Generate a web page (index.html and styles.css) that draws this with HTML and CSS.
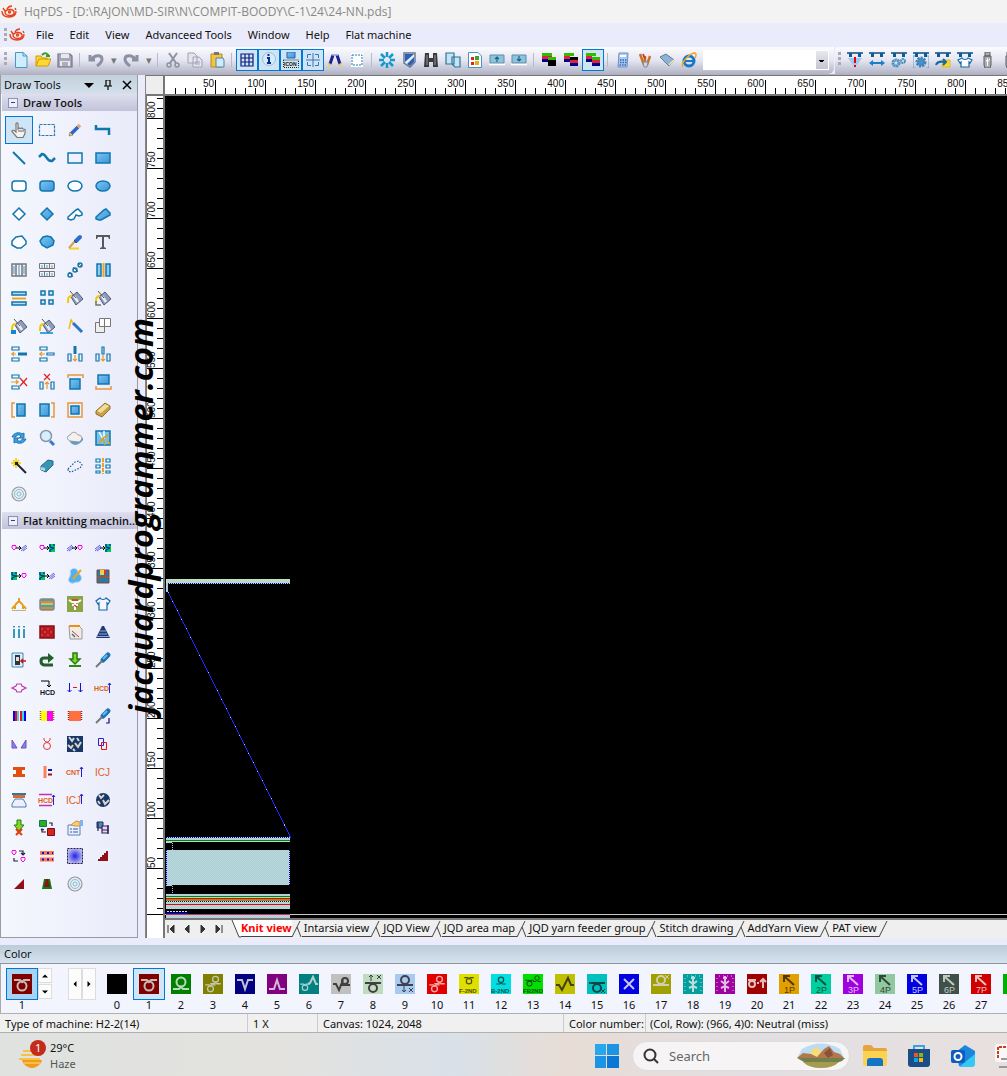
FILE: index.html
```html
<!DOCTYPE html>
<html lang="en">
<head>
<meta charset="utf-8">
<title>HqPDS</title>
<meta name="viewport" content="width=device-width, initial-scale=1">
<link rel="stylesheet" href="styles.css">
</head>
<body>
<svg class="defs" aria-hidden="true">
  <defs>
    <linearGradient id="blue" x1="0" y1="0" x2="1" y2="1"><stop offset="0" stop-color="#7cc4f2"/><stop offset="1" stop-color="#3b95d8"/></linearGradient>
    <pattern id="knit" width="2" height="2" patternUnits="userSpaceOnUse"><path fill="#a6caf0" d="M0 0h2v2H0z"/><path fill="#c0dcc0" d="M0 0h1v1H0zM1 1h1v1H1z"/></pattern>
    <radialGradient id="halo"><stop offset="0" stop-color="#2222e8"/><stop offset="1" stop-color="#b4b4ee"/></radialGradient>
  </defs>
  <symbol id="logo" viewBox="0 0 16 14"><g fill="none" stroke="#e8421e" stroke-width="1.400"><path d="M4 8c0-4 8-5 9-1s-7 5-9 1zM6 4c1-2 3-3 5-3M1 6c0 4 3 6 7 6s7-2 7-6M2 3l2 3M14 3l1 2"/><circle cx="8.500" cy="7" r="1"/></g></symbol>
  <symbol id="front" viewBox="0 0 20 20"><path d="M2 6h6l2 2 2-2h6"/><circle cx="10" cy="12" r="4.500"/></symbol>
  <symbol id="back" viewBox="0 0 20 20"><path d="M2 15h6l2-2 2 2h6"/><circle cx="10" cy="8" r="4.500"/></symbol>
  <symbol id="arrow" viewBox="0 0 20 20"><path d="M5 2l10 9M5 8V2h6"/></symbol>
  <symbol id="rail" viewBox="0 0 16 16"><path stroke="#0c4a80" stroke-width="1.500" d="M0 1h16"/><path fill="#0c5a9a" stroke="none" d="M2 1h3v4H2zM11 1h3v4h-3z"/></symbol>
  <symbol id="bucket" viewBox="0 0 16 16"><path d="M4 7l6-5 6 7-7 6z" fill="#8f9bb8" stroke="#4f5a78" stroke-width="1"/><path d="M7 6l4 6" stroke="#e8eef8" stroke-width="2.500"/><path d="M9 8L3 1" stroke="#555" stroke-width="1"/><path d="M5 6C1 6 1 8 1 13" stroke="#f0c800" stroke-width="2"/></symbol>
  <symbol id="heart" viewBox="0 0 6 8"><path d="M2 1L1 2v2l2 2 2-2V2L4 1 3 2z" fill="none" stroke="#f0e" stroke-width="1"/></symbol>
  <symbol id="slash" viewBox="0 0 6 8"><path d="M0 5l5-4M0 7l6-5M2 7l4-3" fill="none" stroke="#22d" stroke-width=".7"/></symbol>
  <symbol id="tile" viewBox="0 0 6 8"><path fill="#0c4" stroke="none" d="M0 0h6v8H0z"/><path fill="none" stroke="#00f" stroke-width="1" d="M1 0v3l4 1-4 2v2M5 0v2"/></symbol>
  <symbol id="to" viewBox="0 0 6 8"><path d="M0 4h5M3 2l2 2-2 2" fill="none" stroke="#000" stroke-width="1"/></symbol>
  <symbol id="target" viewBox="0 0 16 16"><circle cx="8" cy="8" r="7" fill="#e4ecf2" stroke="#999" stroke-width="1.200"/><circle cx="8" cy="8" r="4.500" stroke="#8fbedb" stroke-width="1"/><circle cx="8" cy="8" r="2" stroke="#8fbedb" stroke-width="1"/></symbol>
  <symbol id="edge" viewBox="0 0 10 18"><path d="M0 17L8 1M5 7l4 10" fill="none" stroke="#444"/></symbol>
</svg>

<header class="titlebar"><svg class="logo"><use href="#logo"/></svg><h1>HqPDS - [D:\RAJON\MD-SIR\N\COMPIT-BOODY\C-1\24\24-NN.pds]</h1></header>

<nav class="menubar" aria-label="Main menu">
  <i class="grip"></i><svg class="logo"><use href="#logo"/></svg>
  <button>File</button><button>Edit</button><button>View</button><button>Advanceed Tools</button><button>Window</button><button>Help</button><button>Flat machine</button>
</nav>

<div class="toolbars">
<div class="toolbar" role="toolbar" aria-label="Standard">
  <i class="grip"></i>
  <button aria-label="New"><svg viewBox="0 0 16 16"><path fill="#cdeefd" stroke="#4a96c8" stroke-width="1" d="M2.500.5H10L14 4v11.500H2.500z"/><path stroke="#4a96c8" stroke-width="1" d="M10 .5V4h4"/></svg></button>
  <button aria-label="Open"><svg viewBox="0 0 16 16"><path fill="#fdd835" stroke="#d09a00" stroke-width="1" d="M1 14V4h5l1 2h5v2M1 14l3-7h12l-3 7z"/><path stroke="#3a9a2a" stroke-width="2" d="M7 3c3-3 6-2 7 2M11 4h4"/></svg></button>
  <button aria-label="Save"><svg viewBox="0 0 16 16"><path fill="#a4a8b8" stroke="#727686" stroke-width="1.200" d="M1 2h12l2 2v11H1z"/><path fill="#e8e8f0" stroke="none" d="M4 2h8v4H4zM3 9h10v5H3z"/><path stroke="#777" stroke-width="1" d="M5 11h6M5 13h6"/></svg></button>
  <i class="sep"></i>
  <button class="wide" aria-label="Undo"><svg viewBox="0 0 16 16"><path stroke="#8b90a2" stroke-width="3" d="M2 3v5h5M3 8c4-6 11-5 11-1 0 3-2 5-5 7"/></svg></button>
  <button class="drop" aria-label="Undo list">▾</button>
  <button class="wide" aria-label="Redo"><svg viewBox="0 0 16 16"><path stroke="#8b90a2" stroke-width="3" d="M14 3v5H9M13 8C9 2 2 3 2 7c0 3 2 5 5 7"/></svg></button>
  <button class="drop" aria-label="Redo list">▾</button>
  <i class="sep"></i>
  <button aria-label="Cut"><svg viewBox="0 0 16 16"><path stroke="#8d91a0" stroke-width="2" d="M4 1l7 10M12 1L5 11"/><circle cx="4" cy="13" r="2" stroke="#8d91a0"/><circle cx="12" cy="13" r="2" stroke="#8d91a0"/></svg></button>
  <button aria-label="Copy"><svg viewBox="0 0 16 16"><path fill="#e4e5ee" stroke="#9fa2b2" stroke-width="1" d="M1 1h6l3 3v7H1zM6 5h6l3 3v7H6z"/><path stroke="#9fa2b2" stroke-width="1" d="M8 10h5M8 12h5"/></svg></button>
  <button aria-label="Paste"><svg viewBox="0 0 16 16"><path fill="#f2c53c" stroke="#b08a28" stroke-width="1" d="M2 2h11v13H2z"/><path fill="#777" stroke="none" d="M5 0h5v3H5z"/><path fill="#cfeafa" stroke="#5484a4" stroke-width="1" d="M7 6h7l1 2v7H7z"/></svg></button>
  <i class="sep"></i>
  <button class="on" aria-pressed="true" aria-label="Grid"><svg viewBox="0 0 16 16"><path stroke="#0a1c78" stroke-width="1.200" d="M2 2h12v12H2zM2 6h12M2 10h12M6 2v12M10 2v12"/></svg></button>
  <button class="on" aria-pressed="true" aria-label="Information"><svg viewBox="0 0 16 16"><circle cx="8" cy="7" r="6.500" fill="#d4ebfb" stroke="#9ac0dc" stroke-width="1"/><path stroke="#0a2e8c" stroke-width="2" d="M6 6h2v5M6 11h4M7.500 2v2"/></svg></button>
  <button class="on" aria-pressed="true" aria-label="Icon display"><svg viewBox="0 0 16 16"><path fill="url(#blue)" stroke="#2b62b8" stroke-width="1" d="M4 0h8v6H4z"/><path stroke="#222" stroke-width="1" stroke-dasharray="1 1" d="M.5 8h15v7.500H.5z"/><text class="tiny" x="1" y="14">ICON</text></svg></button>
  <button class="on" aria-pressed="true" aria-label="Crosshair"><svg viewBox="0 0 16 16"><path stroke="#3a74b4" stroke-width="1" d="M2.500 6V2.500H6M10 2.500h3.500V6M2.500 10v3.500H6M10 13.500h3.500V10M8 1v5M8 10v5M1 8h5M10 8h5M7 7h2v2H7z"/></svg></button>
  <button aria-label="Pens"><svg viewBox="0 0 16 16"><path stroke="#1a2090" stroke-width="3" d="M3 12L6 3M13 12L10 3"/><path stroke="#8aa0e0" stroke-width="1.500" d="M5 3h6"/><path fill="#f5d020" stroke="none" d="M1 15l1-4 2 1zM15 15l-1-4-2 1z"/></svg></button>
  <button aria-label="Selection"><svg viewBox="0 0 16 16"><path fill="#fff" stroke="none" d="M2 1h12v14H2z"/><path stroke="#1b7cae" stroke-width="1" stroke-dasharray="2 1" d="M3 3h10v10H3z"/></svg></button>
  <i class="sep"></i>
  <button aria-label="Spin"><svg viewBox="0 0 16 16"><path stroke="#1598cc" stroke-width="2.500" d="M8 0v5M8 11v5M0 8h5M11 8h5M2 2l4 4M10 10l4 4M14 2l-4 4M6 10l-4 4"/></svg></button>
  <button aria-label="Shield"><svg viewBox="0 0 16 16"><path fill="#e9eef6" stroke="#6d7890" d="M3 1h11v9l-5 5-6-4z"/><path fill="#2563b8" stroke="none" d="M4 2h9l-9 8zM13 5v5l-4 4-3-2z"/></svg></button>
  <button aria-label="Find"><svg viewBox="0 0 16 16"><path fill="#3a3a3e" stroke="none" d="M2 1h4v5h4V1h4l1 14h-5v-5H6v5H1z"/><path stroke="#999" stroke-width="1" d="M4 3v10M12 3v10"/></svg></button>
  <button aria-label="Cascade"><svg viewBox="0 0 16 16"><path fill="#c5e4f3" stroke="#2f7297" stroke-width="1.200" d="M1 1h8v11H1zM7 5h8v10h-5l-3-3z"/></svg></button>
  <button aria-label="Color file"><svg viewBox="0 0 16 16"><path fill="#fff" stroke="#4b93c6" stroke-width="1" d="M1.500.5H11L14.500 4v11.500h-13z"/><path stroke="none" fill="#3aa430" d="M8 4h4v4H8z"/><path stroke="none" fill="#d22" d="M4 5h3v3H4zM4 10h3v3H4z"/><path stroke="none" fill="#e8ae10" d="M8 9h4v4H8z"/></svg></button>
  <button aria-label="Upload"><svg viewBox="0 0 16 16"><path fill="#8fc3dc" stroke="#5b8eaa" stroke-width="1" d="M1 3h14v8H1z"/><path stroke="#fff" d="M0 12.500h16"/><path stroke="#15648c" stroke-width="1.200" d="M8 10V5M6 7l2-2 2 2"/></svg></button>
  <button aria-label="Download"><svg viewBox="0 0 16 16"><path fill="#8fc3dc" stroke="#5b8eaa" stroke-width="1" d="M1 3h14v8H1z"/><path stroke="#fff" d="M0 12.500h16"/><path stroke="#15648c" stroke-width="1.200" d="M8 4v5M6 7l2 2 2-2"/></svg></button>
  <i class="sep"></i>
  <button aria-label="Layer front"><svg viewBox="0 0 16 16"><g stroke="none"><path fill="#3b0" d="M1 1h10v3H1z"/><path fill="#e02040" d="M1 4h10v3H1z"/><path fill="#008" d="M1 7h6v3H1z"/><path fill="#3b0" d="M7 5h8v3H7z"/><path fill="#000" d="M7 8h8v6H7z"/></g></svg></button>
  <button aria-label="Layer middle"><svg viewBox="0 0 16 16"><g stroke="none"><path fill="#3b0" d="M1 1h10v3H1z"/><path fill="#e02040" d="M1 4h6v3H1z"/><path fill="#008" d="M1 7h6v3H1z"/><path fill="#000" d="M7 5h8v3H7z"/><path fill="#e02040" d="M7 8h8v3H7z"/><path fill="#008" d="M7 11h8v3H7z"/></g></svg></button>
  <button class="on" aria-pressed="true" aria-label="Layer all"><svg viewBox="0 0 16 16"><g stroke="none"><path fill="#3b0" d="M1 1h10v3H1z"/><path fill="#e02040" d="M1 4h6v3H1z"/><path fill="#008" d="M1 7h6v3H1z"/><path fill="#3b0" d="M7 5h8v3H7z"/><path fill="#e02040" d="M7 8h8v3H7z"/><path fill="#008" d="M7 11h8v3H7z"/></g></svg></button>
  <i class="sep"></i>
  <button aria-label="Calculator"><svg viewBox="0 0 16 16"><path fill="#a9cbf2" stroke="#6a90c8" stroke-width="1" d="M4 1h9l-1 14H3z"/><path stroke="#fff" stroke-width="2" d="M5 4h6"/><path stroke="#3a68b4" stroke-width="1.500" stroke-dasharray="1.500 1" d="M5 8h7M5 10.500h7M4.500 13h7"/></svg></button>
  <button aria-label="Brushes"><svg viewBox="0 0 16 16"><path stroke="#bf7828" stroke-width="2.500" d="M7 13L3 2M8 13V4M10 13l3-9"/><path stroke="#d33" stroke-width="2" d="M6 2l2 5"/><path fill="#ccd6e0" stroke="#889" stroke-width="1" d="M6 10h5l-1 5H7z"/></svg></button>
  <button aria-label="Eraser"><svg viewBox="0 0 16 16"><path fill="#8fb3d6" stroke="#5f7990" stroke-width="1" d="M1 5l6-3 8 6-5 6z"/><path stroke="#f4e6b4" stroke-width="1.500" d="M10 13l5-5"/></svg></button>
  <button aria-label="Browser"><svg viewBox="0 0 16 16"><circle cx="8" cy="9" r="5" stroke="#1878c8" stroke-width="3"/><path stroke="#1878c8" stroke-width="2" d="M4 9h9"/><path stroke="#f3a31c" stroke-width="1.500" d="M2 15C-1 11 9 1 14 1c2 1 1 3 0 5"/></svg></button>
  <select class="combo" aria-label="Quick search"><option></option></select>
</div>
<div class="toolbar machine" role="toolbar" aria-label="Machine">
  <i class="grip"></i>
  <button aria-label="Check"><svg viewBox="0 0 16 16"><use href="#rail"/><path fill="#9dc9f2" stroke="none" d="M1 6h14l-5 7H6z"/><path stroke="#e00" stroke-width="2" d="M8 5v6M8 13v2"/></svg></button>
  <button aria-label="Width"><svg viewBox="0 0 16 16"><use href="#rail"/><path fill="#1b7ec8" stroke="none" d="M0 11l4-3v2h8V8l4 3-4 3v-2H4v2z"/></svg></button>
  <button aria-label="Gears"><svg viewBox="0 0 16 16"><use href="#rail"/><circle cx="5" cy="11" r="3" stroke="#4a90c4" stroke-width="3" stroke-dasharray="2 .5"/><circle cx="12" cy="9" r="2" stroke="#4a90c4" stroke-width="2" stroke-dasharray="2 .5"/></svg></button>
  <button aria-label="Setup"><svg viewBox="0 0 16 16"><use href="#rail"/><circle cx="8" cy="10" r="4" fill="#4a90c4" stroke="#3f86bb" stroke-width="3" stroke-dasharray="2 1"/><path stroke="#5aa0d0" stroke-width="1" d="M2 4H0v12h3M14 4h2v12h-3"/></svg></button>
  <button aria-label="Transfer"><svg viewBox="0 0 16 16"><use href="#rail"/><path fill="#f6d83c" stroke="#e5bd10" stroke-width="1" d="M8 8h7v7H7z"/><path stroke="#1668a8" stroke-width="2" d="M1 13c1-3 4-4 9-3M8 7l3 3-3 3"/></svg></button>
  <button aria-label="Garment"><svg viewBox="0 0 16 16"><use href="#rail"/><path fill="#fff" stroke="#1668a8" stroke-width="1.200" d="M5 6L1 8l2 3 1-1v5h8v-5l1 1 2-3-4-2c-1 2-5 2-6 0z"/></svg></button>
  <button aria-label="USB drive"><svg viewBox="0 0 16 16"><path fill="#aaadb0" stroke="#5c6064" stroke-width="1" d="M6 0h5v4H6zM5 4h7v9l-1 3H6l-1-3z"/><path stroke="#fff" stroke-width="1" d="M8.500 6v8M7 8l1.500 2L11 7"/></svg></button>
  <button aria-label="USB drive 2"><svg viewBox="0 0 16 16"><path fill="#aaadb0" stroke="#5c6064" stroke-width="1" d="M6 0h5v4H6zM5 4h7v9l-1 3H6l-1-3z"/></svg></button>
</div>
</div>

<div class="workspace">
<aside class="tools">
  <div class="dock-head"><h2>Draw Tools</h2>
    <button aria-label="Dock menu"><svg viewBox="0 0 10 10"><path fill="#000" stroke="none" d="M0 3h10L5 8z"/></svg></button>
    <button aria-label="Pin"><svg viewBox="0 0 10 10"><path stroke="#000" stroke-width="1.200" d="M3 0h4v6M3 0v6M1 6h8M5 6v4"/></svg></button>
    <button aria-label="Close"><svg viewBox="0 0 10 10"><path stroke="#000" stroke-width="1.500" d="M1 1l8 8M9 1L1 9"/></svg></button>
  </div>
  <h3><span class="minus"></span>Draw Tools</h3>
  <div class="grid">
    <button class="on" aria-label="Hand"><svg viewBox="0 0 16 16"><path fill="#f4f4f2" stroke="#777" stroke-width="1.200" d="M5 10V2c0-1.500 2-1.500 2 0v5l1-1 1.500.5L11 6l1 1 2 .5v4l-2 4H6L1 9.500c0-2 2-1.500 4 .5zM8 8v2M10 8v2M12 8v2"/></svg></button>
    <button aria-label="Marquee"><svg viewBox="0 0 16 16"><path stroke="#277ba8" stroke-width="1.200" stroke-dasharray="3 1" d="M.5 2.500h15v11H.5z"/></svg></button>
    <button aria-label="Pencil"><svg viewBox="0 0 16 16"><path stroke="#2b66cc" stroke-width="3.500" d="M4 12l7-7"/><path stroke="#e0a66c" stroke-width="3.500" d="M11 5l2-2"/><path fill="#f3c56b" stroke="#555" stroke-width=".5" d="M2 14l1-4 3 3z"/></svg></button>
    <button aria-label="Polyline"><svg viewBox="0 0 16 16"><path stroke-width="2.500" d="M1 3v4h13v6"/></svg></button>
    <button aria-label="Line"><svg viewBox="0 0 16 16"><path stroke-width="2" d="M2 2l12 12"/></svg></button>
    <button aria-label="Curve"><svg viewBox="0 0 16 16"><path stroke-width="2.500" d="M0 7l3-3c5 0 4 8 10 7l3-3"/></svg></button>
    <button aria-label="Rectangle"><svg viewBox="0 0 16 16"><path d="M1 3h14v10H1z"/></svg></button>
    <button aria-label="Filled rectangle"><svg viewBox="0 0 16 16"><path fill="url(#blue)" d="M1 3h14v10H1z"/></svg></button>
    <button aria-label="Rounded rectangle"><svg viewBox="0 0 16 16"><rect x="1" y="3" width="14" height="10" rx="3" fill="#fff"/></svg></button>
    <button aria-label="Filled rounded rectangle"><svg viewBox="0 0 16 16"><rect x="1" y="3" width="14" height="10" rx="3" fill="url(#blue)"/></svg></button>
    <button aria-label="Ellipse"><svg viewBox="0 0 16 16"><ellipse cx="8" cy="8" rx="7" ry="5" fill="#fff"/></svg></button>
    <button aria-label="Filled ellipse"><svg viewBox="0 0 16 16"><ellipse cx="8" cy="8" rx="7" ry="5" fill="url(#blue)"/></svg></button>
    <button aria-label="Diamond"><svg viewBox="0 0 16 16"><path fill="#fff" d="M8 2l6 6-6 6-6-6z"/></svg></button>
    <button aria-label="Filled diamond"><svg viewBox="0 0 16 16"><path fill="url(#blue)" d="M8 2l6 6-6 6-6-6z"/></svg></button>
    <button aria-label="Polygon"><svg viewBox="0 0 16 16"><path fill="#fff" d="M1 11l8-7 2-1 4 4v2l-3 1-3-1-2 4-3 1-3-1z"/></svg></button>
    <button aria-label="Filled polygon"><svg viewBox="0 0 16 16"><path fill="url(#blue)" d="M1 11l8-7 2-1 4 4v2l-9 5H4l-3-1z"/></svg></button>
    <button aria-label="Free shape"><svg viewBox="0 0 16 16"><path fill="#fff" d="M5 3l6-1 4 5v3l-5 4H6l-5-3V7z"/></svg></button>
    <button aria-label="Filled free shape"><svg viewBox="0 0 16 16"><path fill="url(#blue)" d="M4 3l4-1 4 1 3 4-1 4-6 3-5-3-2-4z"/></svg></button>
    <button aria-label="Color picker"><svg viewBox="0 0 16 16"><path stroke="#f6d21a" stroke-width="2" d="M2 14.500h10"/><path stroke="#d4a050" stroke-width="2" d="M2 14l6-7"/><path stroke="#2d6fc8" stroke-width="4" stroke-linecap="round" d="M9 7l4-4"/><path stroke="#444" stroke-width="1" d="M7 6l3 3"/></svg></button>
    <button aria-label="Text"><svg viewBox="0 0 16 16"><path fill="#555a60" stroke="none" d="M1 1h14v4h-1l-1-2H9v10l2 1v1H5v-1l2-1V3H3L2 5H1z"/></svg></button>
    <button aria-label="Columns"><svg viewBox="0 0 16 16"><path stroke="#777" d="M1 2h14v12H1zM5 2v12M11 2v12"/><path stroke="#4090c0" stroke-width="1" d="M3 4v8M8 2v12M13 4v8"/></svg></button>
    <button aria-label="Cells"><svg viewBox="0 0 16 16"><path stroke="#777" stroke-width="1" d="M.5 1.500h15v5H.5zM.5 9.500h15v5H.5zM5.500 2v5M10.500 2v5M5.500 9.500v5M10.500 9.500v5"/><path stroke="#4ba0cc" stroke-width="1" d="M3 3v3M8 3v3M13 3v3M3 11v3M8 11v3M13 11v3"/></svg></button>
    <button aria-label="Diagonal copy"><svg viewBox="0 0 16 16"><circle cx="3" cy="13" r="2"/><circle cx="8" cy="8" r="2"/><circle cx="13" cy="3" r="2"/><path stroke="#445" stroke-width=".7" d="M2 10l4 5M6 5l5 5M11 1l4 4"/></svg></button>
    <button aria-label="Mirror vertical"><svg viewBox="0 0 16 16"><path fill="#8fcbee" d="M2 2h4v12H2zM11 2h4v12h-4z"/><path stroke="#f0a41c" stroke-width="2" d="M8.500 1v14"/></svg></button>
    <button aria-label="Mirror horizontal"><svg viewBox="0 0 16 16"><path fill="#b3def4" d="M1 2h14v3H1zM1 12h14v3H1z"/><path stroke="#f0a41c" stroke-width="2" d="M1 8.500h14"/></svg></button>
    <button aria-label="Four copies"><svg viewBox="0 0 16 16"><path fill="#ceeafa" d="M2 1h4v4H2zM10 1h4v4h-4zM2 10h4v4H2zM10 10h4v4h-4z"/></svg></button>
    <button aria-label="Fill"><svg viewBox="0 0 16 16"><use href="#bucket"/></svg></button>
    <button aria-label="Fill edge"><svg viewBox="0 0 16 16"><use href="#bucket"/><path stroke="#776" d="M1 11v4h5"/></svg></button>
    <button aria-label="Fill color"><svg viewBox="0 0 16 16"><use href="#bucket"/><path fill="#18c" stroke="none" d="M0 12h5v4H0z"/></svg></button>
    <button aria-label="Fill line"><svg viewBox="0 0 16 16"><use href="#bucket"/><path stroke="#08d" d="M1 15h13"/></svg></button>
    <button aria-label="Outline pen"><svg viewBox="0 0 16 16"><path stroke="#2876c8" stroke-width="3" d="M6 5l9 9"/><path stroke="#efbd18" d="M2 11L4 2l2 3"/></svg></button>
    <button aria-label="Pages"><svg viewBox="0 0 16 16"><path fill="#eee" stroke="#777" stroke-width="1" d="M.5 4.500h9v10h-9z"/><path fill="#fff" stroke="#777" stroke-width="1" d="M4.500.5h5v8h-5zM9.500.5h6v8h-6z"/></svg></button>
    <button aria-label="Insert row left"><svg viewBox="0 0 16 16"><path d="M1 1h7v3H1zM1 12h7v3H1z" stroke-width="1.200"/><path stroke-width="3" d="M7 8h9"/><path stroke="#e69a2c" stroke-width="1.200" d="M0 8h5M3 6L1 8l2 2"/></svg></button>
    <button aria-label="Insert rows"><svg viewBox="0 0 16 16"><path d="M1 1h7v3H1zM1 12h7v3H1zM8 7h7v2H8z" stroke-width="1.200"/><path stroke="#e69a2c" stroke-width="1.200" d="M0 8h6M3 6L1 8l2 2"/></svg></button>
    <button aria-label="Insert column"><svg viewBox="0 0 16 16"><path d="M1 8h3v7H1zM12 8h3v7h-3z" stroke-width="1.200"/><path stroke-width="3" d="M8 0v8"/><path stroke="#e69a2c" stroke-width="1.200" d="M8 9v6M6 13l2 2 2-2"/></svg></button>
    <button aria-label="Insert columns"><svg viewBox="0 0 16 16"><path d="M1 8h3v7H1zM12 8h3v7h-3zM7 1h2v7H7z" stroke-width="1.200"/><path stroke="#e69a2c" stroke-width="1.200" d="M8 9v6M6 13l2 2 2-2"/></svg></button>
    <button aria-label="Delete row"><svg viewBox="0 0 16 16"><path d="M1 1h7v3H1zM1 12h7v3H1z" stroke-width="1.200"/><path stroke="#e69a2c" stroke-width="1.200" d="M0 8h8M5 6l2 2-2 2"/><path stroke="#d22" stroke-width="1.200" d="M9 4l7 8M16 4l-7 8"/></svg></button>
    <button aria-label="Delete column"><svg viewBox="0 0 16 16"><path d="M1 8h3v7H1zM12 8h3v7h-3z" stroke-width="1.200"/><path stroke="#e69a2c" stroke-width="1.200" d="M8 15V8M6 10l2-2 2 2"/><path stroke="#d22" stroke-width="1.200" d="M5 0l6 6M11 0L5 6"/></svg></button>
    <button aria-label="Align top"><svg viewBox="0 0 16 16"><path stroke="#e8963c" d="M1 4V1h15v3"/><path fill="url(#blue)" d="M3 5h10v10H3z"/></svg></button>
    <button aria-label="Align bottom"><svg viewBox="0 0 16 16"><path stroke="#e8963c" d="M1 12v3h15v-3"/><path fill="url(#blue)" d="M3 1h11v9H3z"/></svg></button>
    <button aria-label="Align left"><svg viewBox="0 0 16 16"><path stroke="#e8963c" d="M4 1H1v14h3"/><path fill="url(#blue)" d="M6 2h8v12H6z"/></svg></button>
    <button aria-label="Align right"><svg viewBox="0 0 16 16"><path stroke="#e8963c" d="M12 1h3v14h-3"/><path fill="url(#blue)" d="M1 2h9v12H1z"/></svg></button>
    <button aria-label="Frame"><svg viewBox="0 0 16 16"><path stroke="#e8963c" d="M1 1h14v14H1z"/><path fill="url(#blue)" d="M4 4h8v8H4z"/></svg></button>
    <button aria-label="Yarn bar"><svg viewBox="0 0 16 16"><path fill="#c9a04c" stroke="#94702a" stroke-width="1" d="M1 9l9-8 5 3v3l-8 8-6-3z"/><path fill="#f2dc9a" stroke="none" d="M2 9l8-7 4 2-8 7z"/></svg></button>
    <button aria-label="Rotate"><svg viewBox="0 0 16 16"><path fill="#3f9ede" stroke="#1b76b4" stroke-width="1" d="M1 7c2-5 8-5 10-3l2-1v5H8l2-2C8 4 5 5 5 7zM15 9c-2 5-8 5-10 3l-2 1V8h5l-2 2c2 2 5 1 5-1z"/></svg></button>
    <button aria-label="Zoom"><svg viewBox="0 0 16 16"><path stroke="#3a78d0" stroke-width="3" d="M11 11l4 4"/><circle cx="7" cy="6" r="5.500" fill="#d6efff" stroke="#8897a8"/></svg></button>
    <button aria-label="Cloud"><svg viewBox="0 0 16 16"><path fill="#5f9cc8" stroke="none" d="M2 10c3 7 10 6 14 0V8z"/><path fill="#f0f0ee" stroke="#999" stroke-width="1" d="M3 11C-1 9 0 6 3 5c3-5 7-2 8 0 5 0 5 5 1 7z"/></svg></button>
    <button aria-label="Scissors"><svg viewBox="0 0 16 16"><path fill="#73c2ee" d="M1 1h14v14H1z"/><path stroke="#fff" d="M4 2l4 7M9 1v8"/><path stroke="#d9a020" d="M8 8l6-3M8 8l2 7M8 8l-4 5M12 10l3 4"/></svg></button>
    <button aria-label="Magic wand"><svg viewBox="0 0 16 16"><path stroke="#f0d000" stroke-width="1.500" d="M5 0v10M0 5h10M2 2l6 6M8 2L2 8"/><path fill="#222" stroke="none" d="M4 4h3v3H4z"/><path stroke="#223" stroke-width="2" d="M6 6l9 9"/></svg></button>
    <button aria-label="Rubber"><svg viewBox="0 0 16 16"><path fill="#3c94b4" stroke="#226c88" stroke-width="1" d="M2 8l7-6 5 1v4l-7 7-5-2z"/><path fill="#a8d8e8" stroke="none" d="M2 9l4 1v3l-4-1z"/></svg></button>
    <button aria-label="Lasso"><svg viewBox="0 0 16 16"><path stroke="#1b5c8c" stroke-width="1.200" stroke-dasharray="1.500 1.500" d="M1 11l7-7 4-1 3 4-2 3-9 4-3-1z"/></svg></button>
    <button aria-label="Array"><svg viewBox="0 0 16 16"><path fill="#dff" stroke-width="1.200" d="M1 1h4v3H1zM11 1h4v3h-4zM1 7h4v3H1zM11 7h4v3h-4zM1 13h4v2H1zM11 13h4v2h-4z"/><path stroke="#eea21c" stroke-width="2" stroke-dasharray="4 1" d="M8 0v16"/></svg></button>
    <button aria-label="Pattern"><svg viewBox="0 0 16 16"><use href="#target"/></svg></button>
  </div>
  <h3><span class="minus"></span>Flat knitting machin...</h3>
  <div class="grid">
    <button aria-label="Loop to stitch"><svg viewBox="0 0 16 16"><use href="#heart" x="0" y="4" width="6" height="8"/><use href="#to" x="5" y="4" width="6" height="8"/><use href="#slash" x="10" y="4" width="6" height="8"/></svg></button>
    <button aria-label="Loop to tile"><svg viewBox="0 0 16 16"><use href="#heart" x="0" y="4" width="6" height="8"/><use href="#to" x="5" y="4" width="6" height="8"/><use href="#tile" x="10" y="4" width="6" height="8"/></svg></button>
    <button aria-label="Stitch to loop"><svg viewBox="0 0 16 16"><use href="#slash" x="0" y="4" width="6" height="8"/><use href="#to" x="5" y="4" width="6" height="8"/><use href="#heart" x="10" y="4" width="6" height="8"/></svg></button>
    <button aria-label="Stitch to tile"><svg viewBox="0 0 16 16"><use href="#slash" x="0" y="4" width="6" height="8"/><use href="#to" x="5" y="4" width="6" height="8"/><use href="#tile" x="10" y="4" width="6" height="8"/></svg></button>
    <button aria-label="Tile to loop"><svg viewBox="0 0 16 16"><use href="#tile" x="0" y="4" width="6" height="8"/><use href="#to" x="5" y="4" width="6" height="8"/><use href="#heart" x="10" y="4" width="6" height="8"/></svg></button>
    <button aria-label="Tile to stitch"><svg viewBox="0 0 16 16"><use href="#tile" x="0" y="4" width="6" height="8"/><use href="#to" x="5" y="4" width="6" height="8"/><use href="#slash" x="10" y="4" width="6" height="8"/></svg></button>
    <button aria-label="Edit garment"><svg viewBox="0 0 16 16"><path fill="#53b0ee" stroke="#b7dcf4" stroke-width="1" d="M3 3c2-4 8-3 8 1l3 4c2 5-3 7-5 6-4 3-9 0-7-4 1-2 2-4 1-7z"/><path stroke="#e9a52a" stroke-width="2" d="M6 11l8-9"/></svg></button>
    <button aria-label="Layers"><svg viewBox="0 0 16 16"><path fill="#2f76a0" stroke="#7b4b3a" stroke-width="1" d="M2 2h12v13H2z"/><path fill="#f2d044" stroke="none" d="M5 2h4v5H5z"/><path fill="#d33" stroke="none" d="M9 2h2v5H9z"/><path stroke="#8c5a48" stroke-width="2" d="M2 9h12"/></svg></button>
    <button aria-label="Structure"><svg viewBox="0 0 16 16"><path stroke="#e4a01c" stroke-width="2" d="M8 2v4M4 9l3-3h2l3 3M4 9v4M12 9v4M1 13l2-3M15 13l-2-3"/><path stroke="#bcb08a" stroke-width="1" d="M1 14.500h14"/></svg></button>
    <button aria-label="Yarn stripes"><svg viewBox="0 0 16 16"><rect x="1" y="3" width="14" height="11" rx="2" fill="#3aa3c4" stroke="#888"/><path stroke="#e88824" stroke-width="2" d="M2 6h12M2 12h12"/><path stroke="#f4d24a" d="M2 8h12"/></svg></button>
    <button aria-label="Needle"><svg viewBox="0 0 16 16"><path fill="#8ba444" stroke="none" d="M0 0h16v16H0z"/><path stroke="#fff" stroke-width="2" d="M2 4l3 2h6l3-2M5 9h6M8 6v8"/><path stroke="#d33" d="M5 4h6M7 9l3 2"/></svg></button>
    <button aria-label="Shirt"><svg viewBox="0 0 16 16"><path fill="#f4f8fe" stroke="#1768ac" stroke-width="1.200" d="M5 2L1 5l2 3 1-1v7h8V7l1 1 2-3-4-3c-1 2-5 2-6 0z"/></svg></button>
    <button aria-label="Needle count"><svg viewBox="0 0 16 16"><path stroke="#3a98b8" stroke-width="2" d="M3 5v9M8 5v9M13 5v9M3 2v1.500M8 2v1.500M13 2v1.500"/></svg></button>
    <button aria-label="Red jacquard"><svg viewBox="0 0 16 16"><path fill="#b81820" stroke="#811" d="M1 2h14v12H1z"/><path stroke="#e0585c" stroke-width="1" stroke-dasharray="2 4" d="M2 5h12M5 8h10M2 11h12"/></svg></button>
    <button aria-label="Notes"><svg viewBox="0 0 16 16"><path fill="#f0ece4" stroke="#999" stroke-width="1" d="M2 2h10l3 3v10H3z"/><path stroke="#e89018" stroke-width="2" d="M2 2h11"/><path stroke="#c33" stroke-width="1" d="M5 7l7 6"/><path stroke="#37a" d="M5 10l3 3"/></svg></button>
    <button aria-label="Cone"><svg viewBox="0 0 16 16"><path fill="#203a78" stroke="none" d="M7 2h2l6 12H1z"/><path stroke="#91a5d0" stroke-width="1" d="M5 7h6M4 10h8M2 12.500h12"/></svg></button>
    <button aria-label="Import"><svg viewBox="0 0 16 16"><path fill="#d8eefc" stroke="#4588b8" stroke-width="1" d="M1 1h11v14H1z"/><path fill="#333" stroke="none" d="M4 3h5v10H4z"/><path fill="#ddd" stroke="none" d="M5 5h3v4H5z"/><path stroke="#c11" d="M15 9h-5M12 7l-2 2 2 2"/></svg></button>
    <button aria-label="Return"><svg viewBox="0 0 16 16"><path stroke="#215f2c" stroke-width="3" d="M14 13H5c-4-1-4-7 0-7h6"/><path fill="#215f2c" stroke="none" d="M9 1l6 5-6 5z"/></svg></button>
    <button aria-label="Download design"><svg viewBox="0 0 16 16"><path fill="#7ddc22" stroke="#2a7a14" d="M6 1h4v6h3l-5 5-5-5h3z"/><path stroke="#2a8a14" stroke-width="2" d="M2 14h12"/></svg></button>
    <button aria-label="Screwdriver"><svg viewBox="0 0 16 16"><path stroke="#1c70b4" stroke-width="5" stroke-linecap="round" d="M8 8l5-5"/><path stroke="#61bcf0" stroke-width="2" d="M8 7l4-4"/><path stroke="#777" stroke-width="2" d="M1 15l6-6"/></svg></button>
    <button aria-label="Pink shape"><svg viewBox="0 0 16 16"><path fill="#fff" stroke="#c030b0" stroke-width="1.200" d="M1 8l4-2 1-2h4l1 2 4 2-4 2-1 2H6l-1-2z"/></svg></button>
    <button aria-label="Set HCD"><svg viewBox="0 0 16 16"><path stroke="#000" stroke-width="1" d="M2 1h8v6M8 5l2 2 2-2"/><text class="tiny dark" x="1" y="15">HCD</text></svg></button>
    <button aria-label="Distance"><svg viewBox="0 0 16 16"><path stroke="#11d" stroke-width="1" d="M2.500 3v9M.5 10l2 2 2-2M13.500 3v9M11.500 10l2 2 2-2"/><path stroke="#e11" stroke-width="1" d="M6 7.500h4"/></svg></button>
    <button aria-label="HCD up"><svg viewBox="0 0 16 16"><text class="tiny" x="-1" y="11">HCD</text><path stroke="#22c" stroke-width="1" d="M14.500 13V3M13 5l1.500-2L16 5"/></svg></button>
    <button aria-label="Vertical stripes"><svg viewBox="0 0 16 16"><path stroke="#00f" stroke-width="2" d="M3 3v10M14 3v10"/><path stroke="#e11" stroke-width="2" d="M5 3v10M10 3v10"/><path stroke="#0cd" stroke-width="1.500" d="M7 3v10M12 3v10"/></svg></button>
    <button aria-label="Yellow magenta"><svg viewBox="0 0 16 16"><path fill="#ff0" stroke="none" d="M2 3h6v10H2z"/><path fill="#f0f" stroke="none" d="M8 3h6v10H8z"/><path stroke="#a60" stroke-dasharray="1 1" d="M1.500 3v10M14.500 3v10"/></svg></button>
    <button aria-label="Orange block"><svg viewBox="0 0 16 16"><path fill="#ff7040" stroke="none" d="M2 3h12v10H2z"/><path stroke="#922" stroke-dasharray="1 1" d="M1.500 3v10M14.500 3v10"/></svg></button>
    <button aria-label="Repair"><svg viewBox="0 0 16 16"><path stroke="#1c70b4" stroke-width="5" stroke-linecap="round" d="M8 8l5-5"/><path stroke="#61bcf0" stroke-width="2" d="M8 7l4-4"/><path stroke="#777" stroke-width="2" d="M1 15l6-6"/><path stroke="#118" stroke-width="1.200" d="M14 10v5h-3"/></svg></button>
    <button aria-label="Split"><svg viewBox="0 0 16 16"><path fill="#48a4ee" stroke="#a038b8" stroke-width="1" d="M1 4l5 8H1zM15 4l-5 8h5z"/></svg></button>
    <button aria-label="Loop"><svg viewBox="0 0 16 16"><path stroke="#e33" stroke-width="1" d="M5 2v2l2 2h2l2-2V2"/><circle cx="8" cy="10" r="3.500" stroke="#e33" stroke-width="1"/></svg></button>
    <button aria-label="Knit texture"><svg viewBox="0 0 16 16"><path fill="#173766" stroke="none" d="M0 0h16v16H0z"/><path stroke="#ddd5cc" stroke-width="2" d="M2 1l3 4 2-3M8 7l3 4 3-5M1 9l3 3 2-3M10 2l2 3M6 13l2 2"/></svg></button>
    <button aria-label="Overlap"><svg viewBox="0 0 16 16"><path stroke="#22d" stroke-width="1" d="M3.500 2.500h5v7h-5z"/><path stroke="#e11" stroke-width="1" d="M6.500 6.500h5v7h-5z"/></svg></button>
    <button aria-label="Rib"><svg viewBox="0 0 16 16"><path fill="#e44d10" stroke="none" d="M2 3h12v3h-3v4h3v3H2v-3h3V6H2z"/></svg></button>
    <button aria-label="Side mark"><svg viewBox="0 0 16 16"><path stroke="#ff8058" stroke-width="3" d="M6 2v12"/><path stroke="#11c" stroke-width="2" d="M9 6h4"/><path stroke="#911" stroke-width="2" d="M9 10.500h4"/></svg></button>
    <button aria-label="Count"><svg viewBox="0 0 16 16"><text class="tiny" x="-1" y="11">CNT</text><path stroke="#22c" stroke-width="1" d="M14.500 13V3M13 5l1.500-2L16 5"/></svg></button>
    <button aria-label="ICJ"><svg viewBox="0 0 16 16"><text class="icj" x="0" y="12">ICJ</text></svg></button>
    <button aria-label="Cone stripes"><svg viewBox="0 0 16 16"><path fill="#db6b2c" stroke="none" d="M2 1h12v5H2z"/><path stroke="#2f76a0" stroke-width="2" d="M1 2h14"/><path fill="#eef" stroke="#4782b4" stroke-width="1" d="M4 7h8l3 5v3H1v-3z"/></svg></button>
    <button aria-label="HCD range"><svg viewBox="0 0 16 16"><path stroke="#c030b0" stroke-width="1.500" d="M0 2.500h13M0 13.500h13"/><text class="tiny" x="-1" y="11">HCD</text><path stroke="#22c" stroke-width="1" d="M14.500 13V3M13 5l1.500-2L16 5"/></svg></button>
    <button aria-label="ICJ up"><svg viewBox="0 0 16 16"><text class="icj" x="-1" y="12">ICJ</text><path stroke="#22c" stroke-width="1" d="M14.500 12V2M13 4l1.500-2L16 4"/></svg></button>
    <button aria-label="Round texture"><svg viewBox="0 0 16 16"><circle cx="8" cy="8" r="7" fill="#173766" stroke="none"/><path stroke="#ddd5cc" stroke-width="2" d="M4 3l2 3 3-3M8 8l2 4 4-4M3 9l2 3"/></svg></button>
    <button aria-label="Remove"><svg viewBox="0 0 16 16"><path fill="#7ddc22" stroke="#2a7a14" stroke-width="1" d="M6 0h4v5h3L8 11 3 5h3z"/><path stroke="#e3390c" stroke-width="2" d="M5 9l6 6M11 9l-6 6"/></svg></button>
    <button aria-label="Swap colors"><svg viewBox="0 0 16 16"><path fill="#2cae1c" stroke="#175" stroke-width="1" d="M.5.5h7v6h-7z"/><path fill="#d22" stroke="#711" stroke-width="1" d="M8.500 8.500h7v7h-7z"/><path stroke="#224" stroke-width="1.200" d="M10 3h3v3M7 12H3V9M2 10l1-1 2 1"/></svg></button>
    <button aria-label="Form"><svg viewBox="0 0 16 16"><path fill="#e8f2fe" stroke="#5c80bc" stroke-width="1" d="M1 5h12v10H1z"/><path stroke="#35a" stroke-width="1" d="M3 9h2M6 9h5M3 12h2M6 12h5"/><path fill="#f5cb80" stroke="#c9963c" stroke-width="1" d="M4 5l5-4 4 1v4H8z"/><path fill="#7cb4f4" stroke="none" d="M13 0h3v6h-3z"/></svg></button>
    <button aria-label="Link"><svg viewBox="0 0 16 16"><path fill="#3d8fc0" stroke="#235" stroke-width="1" d="M2 2h6v6H2z"/><path fill="#ecd6f4" stroke="#325" stroke-width="1.200" d="M7 6h6v7H7z"/><path stroke="#325" stroke-width="1.200" d="M3 2v9M7 10h6M13 5v9"/></svg></button>
    <button aria-label="Exchange loops"><svg viewBox="0 0 16 16"><use href="#heart" x="0" y="1" width="6" height="8"/><use href="#heart" x="9" y="8" width="6" height="8"/><path stroke="#224" stroke-width="1.200" d="M8 3h4v3M7 13H3v-3M10 5l2 2 2-2"/></svg></button>
    <button aria-label="Dotted rows"><svg viewBox="0 0 16 16"><path stroke="#ff7a52" stroke-width="4" d="M1 5h14M1 11.500h14"/><path stroke="#11c" stroke-width="2" stroke-dasharray="2 3" d="M3 5h11M3 11.500h11"/></svg></button>
    <button aria-label="Glow"><svg viewBox="0 0 16 16"><path fill="url(#halo)" stroke="#224" stroke-width="1" stroke-dasharray="2 1" d="M.5.5h15v15H.5z"/></svg></button>
    <button aria-label="Stair"><svg viewBox="0 0 16 16"><path fill="#911018" stroke="none" d="M3 13v-2h2V9h2V7h2V5h2V3h2v10z"/></svg></button>
    <button aria-label="Slope"><svg viewBox="0 0 16 16"><path fill="#911018" stroke="none" d="M3 13L13 3v10z"/></svg></button>
    <button aria-label="Taper"><svg viewBox="0 0 16 16"><path fill="#0c7f10" stroke="none" d="M5 3h6l2 10H3z"/><path fill="#8b1018" stroke="none" d="M7 3h2l2 8H5z"/></svg></button>
    <button aria-label="Circular pattern"><svg viewBox="0 0 16 16"><use href="#target"/></svg></button>
  </div>
  <div class="watermark">jacquardprogrammer.com</div>
</aside>

<main class="editor">
  <div class="corner"></div>
  <div class="ruler-x"><span>50</span><span>100</span><span>150</span><span>200</span><span>250</span><span>300</span><span>350</span><span>400</span><span>450</span><span>500</span><span>550</span><span>600</span><span>650</span><span>700</span><span>750</span><span>800</span><span>850</span></div>
  <div class="ruler-y"><div class="scale"><span>800</span><span>750</span><span>700</span><span>650</span><span>600</span><span>550</span><span>500</span><span>450</span><span>400</span><span>350</span><span>300</span><span>250</span><span>200</span><span>150</span><span>100</span><span>50</span><span class="zero"></span></div></div>
  <div class="canvas">
    <svg class="design" viewBox="0 0 126 343" shape-rendering="crispEdges" role="img" aria-label="Knitting pattern">
      <path fill="#c0dcc0" d="M1 4h124v4H1z"/><path fill="#a6caf0" d="M1 8h2v9H1z"/>
      <path stroke="#00f" stroke-dasharray="1 1" d="M3 8.500h122"/><path stroke="#c0dcc0" stroke-dasharray="1 1" stroke-dashoffset="1" d="M3 8.500h122"/>
      <path stroke="#22f" stroke-width="1.200" fill="none" d="M3 17l122 244v2"/><path stroke="#cbbf9c" fill="none" stroke-dasharray="1 9" d="M3 17l122 244"/>
      <path fill="url(#knit)" d="M1 262h124v5H1zM1 267h6v1H1zM1 275h124v35H1zM1 310h6v1H1zM1 319h124v15H1zM1 340h124v3H1z"/>
      <path stroke="#00c" stroke-dasharray="1 1" d="M1 262.500h124M1.500 275v35M124.500 275v35M1 326.500h124"/>
      <path stroke="#a6caf0" stroke-dasharray="1 1" d="M7.500 268v7M7.500 311v8"/>
      <path stroke="#080" d="M1 265.500h124M1 321.500h124"/><path stroke="#e00" d="M1 323.500h124M1 329.500h124"/><path stroke="#a08c00" stroke-width="2" d="M1 325h124"/>
      <path stroke="#dde" stroke-dasharray="2 1" d="M2 336.500h21"/><path stroke="#00f" d="M1 338.500h22"/><path stroke="#c0306a" d="M1 339.500h124"/>
    </svg>
  </div>
  <nav class="tabs" aria-label="Views">
    <div class="pager">
      <button aria-label="First"><svg viewBox="0 0 8 8"><path d="M1 0v8M7 0v8L3 4z"/></svg></button>
      <button aria-label="Previous"><svg viewBox="0 0 8 8"><path d="M6 0v8L2 4z"/></svg></button>
      <button aria-label="Next"><svg viewBox="0 0 8 8"><path d="M2 0v8l4-4z"/></svg></button>
      <button aria-label="Last"><svg viewBox="0 0 8 8"><path d="M7 0v8M1 0v8l4-4z"/></svg></button>
    </div>
    <svg class="lead" viewBox="0 0 10 18"><path fill="#fff" stroke="none" d="M1 0h9v17H8z"/><path fill="none" stroke="#444" d="M1 0l7 17h2"/></svg>
    <button class="tab active">Knit view</button><svg class="edge"><use href="#edge"/></svg>
    <button class="tab">Intarsia view</button><svg class="edge"><use href="#edge"/></svg>
    <button class="tab">JQD View</button><svg class="edge"><use href="#edge"/></svg>
    <button class="tab">JQD area map</button><svg class="edge"><use href="#edge"/></svg>
    <button class="tab">JQD yarn feeder group</button><svg class="edge"><use href="#edge"/></svg>
    <button class="tab">Stitch drawing</button><svg class="edge"><use href="#edge"/></svg>
    <button class="tab">AddYarn View</button><svg class="edge"><use href="#edge"/></svg>
    <button class="tab">PAT view</button><svg class="edge" viewBox="0 0 10 18"><path d="M0 17L8 1" stroke="#444"/></svg>
  </nav>
</main>
</div>

<section class="palette">
  <h2>Color</h2>
  <div class="colors">
    <div class="current"><div class="pick"><svg viewBox="0 0 20 20" style="background:#800000;color:#c8b8b8"><use href="#front"/></svg></div>
      <div class="spin"><button aria-label="Up"><svg viewBox="0 0 8 8"><path d="M0 6h8L4 2z"/></svg></button><button aria-label="Down"><svg viewBox="0 0 8 8"><path d="M0 2h8L4 6z"/></svg></button></div>
      <span>1</span></div>
    <div class="scroll"><button aria-label="Scroll left"><svg viewBox="0 0 8 8"><path d="M6 0v8L2 4z"/></svg></button><button aria-label="Scroll right"><svg viewBox="0 0 8 8"><path d="M2 0v8l4-4z"/></svg></button></div>
    <div class="swatches">
      <button><svg viewBox="0 0 20 20" style="background:#000000"></svg>0</button>
      <button class="sel"><svg viewBox="0 0 20 20" style="background:#800000;color:#c8b8b8"><use href="#front"/></svg>1</button>
      <button><svg viewBox="0 0 20 20" style="background:#008000;color:#b8d8b8"><use href="#back"/></svg>2</button>
      <button><svg viewBox="0 0 20 20" style="background:#808000;color:#c8c8b0"><use href="#back" x="6" y="0" width="13" height="13"/><use href="#front" x="1" y="7" width="13" height="13"/></svg>3</button>
      <button><svg viewBox="0 0 20 20" style="background:#000080;color:#c0c0d8"><path d="M2 6h5l3 9 3-9h5"/></svg>4</button>
      <button><svg viewBox="0 0 20 20" style="background:#800080;color:#d8b8d8"><path d="M2 15h5l3-9 3 9h5"/></svg>5</button>
      <button><svg viewBox="0 0 20 20" style="background:#008080;color:#b0d0d0"><use href="#front" x="0" y="6" width="12" height="13"/><path d="M9 10l2-1 3-6 3 7h2"/></svg>6</button>
      <button><svg viewBox="0 0 20 20" style="background:#c0c0c0;color:#404040"><path d="M2 10h3l3 6 4-10"/><circle cx="14" cy="7" r="3"/><path d="M9 11h10"/></svg>7</button>
      <button><svg viewBox="0 0 20 20" style="background:#c0dcc0;color:#404040"><path d="M2 9h16"/><circle cx="10" cy="14" r="4"/><path class="thin" d="M8 7V1M6 3l2-2 2 2M14 1l4 4M18 1l-4 4"/></svg>8</button>
      <button><svg viewBox="0 0 20 20" style="background:#a6caf0;color:#404050"><path d="M2 11h16"/><circle cx="10" cy="6" r="4"/><path class="thin" d="M9 12v6M7 16l2 2 2-2M14 14l4 4M18 14l-4 4"/></svg>9</button>
      <button><svg viewBox="0 0 20 20" style="background:#e00000;color:#f0b0b0"><use href="#back" x="6" y="0" width="13" height="13"/><use href="#front" x="1" y="7" width="13" height="13"/></svg>10</button>
      <button><svg viewBox="0 0 20 20" style="background:#e0e000;color:#505010"><use href="#front" x="3" y="0" width="14" height="12"/><text x="0" y="19">F-2ND</text></svg>11</button>
      <button><svg viewBox="0 0 20 20" style="background:#00e0e0;color:#105050"><use href="#back" x="3" y="1" width="14" height="12"/><text x="0" y="19">B-2ND</text></svg>12</button>
      <button><svg viewBox="0 0 20 20" style="background:#00e000;color:#105010"><use href="#front" x="1" y="3" width="11" height="11"/><use href="#back" x="9" y="0" width="10" height="10"/><text x="0" y="19">FB2ND</text></svg>13</button>
      <button><svg viewBox="0 0 20 20" style="background:#c0c000;color:#404010"><path d="M1 11h3l3 5 6-12 3 7h3"/></svg>14</button>
      <button><svg viewBox="0 0 20 20" style="background:#00c0c0;color:#104848"><path d="M2 9h16"/><circle cx="10" cy="14" r="4"/><path class="thin" d="M14 15l4 4M18 15l-4 4"/></svg>15</button>
      <button><svg viewBox="0 0 20 20" style="background:#0000e0;color:#c8c8f0"><path d="M5 5l10 10M15 5L5 15"/></svg>16</button>
      <button><svg viewBox="0 0 20 20" style="background:#a0a000;color:#d0d0b0"><path d="M2 11h16"/><circle cx="10" cy="6" r="4"/><path class="thin" d="M14 1l4 4M18 1l-4 4"/></svg>17</button>
      <button><svg viewBox="0 0 20 20" style="background:#00a0a0;color:#c0dcdc"><path d="M10 2v16M6 7l4 3 4-3M6 14l4-2 4 2M8 4h4"/><path stroke-width="1" stroke-dasharray="1 3" d="M2 4v14M18 4v14M4 2h14"/></svg>18</button>
      <button><svg viewBox="0 0 20 20" style="background:#a000a0;color:#e0c0e0"><path d="M10 2v16M6 7l4 3 4-3M6 14l4-2 4 2M8 4h4"/><path stroke-width="1" stroke-dasharray="1 3" d="M2 4v14M18 4v14M4 2h14"/></svg>19</button>
      <button><svg viewBox="0 0 20 20" style="background:#a00000;color:#e0c0c0"><path d="M1 6h8"/><circle cx="5" cy="10" r="3"/><path d="M16 14V5M13 8l3-3 3 3M10 9h2"/></svg>20</button>
      <button><svg viewBox="0 0 20 20" style="background:#e0a000;color:#503808"><use href="#arrow"/><text class="big" x="5" y="19">1P</text></svg>21</button>
      <button><svg viewBox="0 0 20 20" style="background:#00d0a0;color:#085040"><use href="#arrow"/><text class="big" x="5" y="19">2P</text></svg>22</button>
      <button><svg viewBox="0 0 20 20" style="background:#a000e0;color:#e0c0f0"><use href="#arrow"/><text class="big" x="5" y="19">3P</text></svg>23</button>
      <button><svg viewBox="0 0 20 20" style="background:#90c8a0;color:#304838"><use href="#arrow"/><text class="big" x="5" y="19">4P</text></svg>24</button>
      <button><svg viewBox="0 0 20 20" style="background:#0000e0;color:#c8c8f0"><use href="#arrow"/><text class="big" x="5" y="19">5P</text></svg>25</button>
      <button><svg viewBox="0 0 20 20" style="background:#405048;color:#c0c8c4"><use href="#arrow"/><text class="big" x="5" y="19">6P</text></svg>26</button>
      <button><svg viewBox="0 0 20 20" style="background:#d00000;color:#f0c0c0"><use href="#arrow"/><text class="big" x="5" y="19">7P</text></svg>27</button>
      <button aria-label="28"><svg viewBox="0 0 20 20" style="background:#00b000;color:#c0f0c0"><use href="#arrow"/></svg></button>
    </div>
  </div>
</section>

<footer class="status"><span class="s1">Type of machine: H2-2(14)</span><span class="s2">1 X</span><span class="s3">Canvas: 1024, 2048</span><span class="s4">Color number:</span><span class="s5">(Col, Row): (966, 4)0: Neutral (miss)</span></footer>

<div class="taskbar">
  <div class="weather">
    <svg width="28" height="30" viewBox="0 0 28 30"><path fill="#f39a1c" d="M3 20h20c-1 4-5 8-10 8s-9-4-10-8z"/><path stroke="#f5c14a" stroke-width="2" d="M4 11h12M2 15h20M0 19h21M5 23h16"/><circle cx="19" cy="8" r="8" fill="#c42b1c"/><text x="16" y="12">1</text></svg>
    <div><b>29°C</b><small>Haze</small></div>
  </div>
  <button aria-label="Start"><svg width="24" height="24" viewBox="0 0 24 24"><path fill="#28a8ec" d="M0 0h11v11H0z"/><path fill="#1b94e4" d="M12 0h12v11H12zM0 12h11v12H0z"/><path fill="#0a78d4" d="M12 12h12v12H12z"/></svg></button>
  <label class="search"><svg width="16" height="16" viewBox="0 0 16 16"><circle cx="7" cy="7" r="5.500" fill="none" stroke="#333" stroke-width="2"/><path stroke="#333" stroke-width="2" d="M11 11l4 4"/></svg><input type="search" placeholder="Search" aria-label="Search">
    <svg width="50" height="26" viewBox="0 0 50 26"><path fill="#bcdcf2" d="M6 6Q25-5 44 6l4 9H1z"/><circle cx="20" cy="10" r="5" fill="#f6dc7a"/><path fill="#b4764c" d="M1 15l6-5 8 1 6 3 7-8 5-3 5 6 6 2 5 5z"/><path fill="#8a5236" d="M28 10l6-5 3 7-5 3z"/><path fill="#70804a" d="M1 15h48q-2 3-6 4H8z"/><path fill="#a69a50" d="M7 19h36q-6 6-18 6T7 19z"/></svg></label>
  <button aria-label="File Explorer"><svg width="24" height="24" viewBox="0 0 24 24"><path fill="#e8a33a" d="M0 3q0-2 2-2h6l3 3h11q2 0 2 2v6H0z"/><path fill="#fcd252" d="M0 7h24v13q0 2-2 2H2q-2 0-2-2z"/><path fill="#1574c4" d="M4 22v-5q0-3 3-3h10q3 0 3 3v5z"/></svg></button>
  <button aria-label="Store"><svg width="24" height="24" viewBox="0 0 24 24"><path fill="none" stroke="#35a6e0" stroke-width="2" d="M7 6V2h10v4"/><path fill="#1b4e88" d="M1 5h22v15q0 3-3 3H4q-3 0-3-3z"/><path fill="#f35325" d="M7 9h4v4H7z"/><path fill="#81bc06" d="M12 9h4v4h-4z"/><path fill="#05a6f0" d="M7 14h4v4H7z"/><path fill="#ffba08" d="M12 14h4v4h-4z"/></svg></button>
  <button aria-label="Outlook"><svg width="24" height="24" viewBox="0 0 24 24"><path fill="#1c86dc" d="M5 8l9-7 10 6v12l-4 3H8z"/><path fill="#35c8f4" d="M8 23l16-13v10q0 3-3 3z"/><rect y="6" width="14" height="13" rx="2" fill="#0f5cc0"/><circle cx="7" cy="12.500" r="3.500" fill="none" stroke="#fff" stroke-width="2"/></svg></button>
  <button aria-label="Snipping Tool"><svg width="24" height="24" viewBox="0 0 24 24"><rect width="24" height="18" rx="3" fill="#f8f8f8"/><path fill="none" stroke="#c8401c" stroke-width="2" stroke-dasharray="3 1" d="M3 14V3h21"/><path stroke="#999" stroke-width="2" d="M6 15h18M4 23h20"/></svg></button>
</div>
</body>
</html>
```
FILE: styles.css
```css
* { box-sizing: border-box; }
body {
  margin: 0;
  min-height: 100vh;
  display: flex;
  flex-direction: column;
  overflow-x: hidden;
  background: #ebecfb;
  color: #111;
  font: 11px/16px "Noto Sans", "Open Sans", sans-serif;
}
h1, h2, h3 { margin: 0; font: inherit; }
button { border: 0; padding: 0; background: none; color: inherit; font: inherit; white-space: nowrap; }
svg { display: block; flex: none; }
.defs { width: 0; height: 0; position: absolute; }
.logo { width: 16px; height: 14px; }

.titlebar { display: flex; align-items: center; gap: 7px; height: 23px; padding-left: 1px; background: #f3f3f3; color: #888; }
.titlebar h1 { font: 12px/16px "Open Sans", "Noto Sans", sans-serif; }

.menubar { display: flex; align-items: center; height: 24px; padding-left: 4px; }
.menubar .logo { margin: 0 3px 0 2px; }
.menubar button { padding: 0 8px; }
.grip { flex: none; width: 3px; height: 15px; background: repeating-linear-gradient(#a8aab6 0 3px, transparent 3px 5px); }

.toolbars { display: flex; height: 28px; overflow: hidden; border-bottom: 1px solid #b0b0bc; }
.toolbar {
  display: flex;
  flex: none;
  align-items: center;
  height: 27px;
  padding: 0 5px 2px 4px;
  border-radius: 3px 0 6px 0;
  background: linear-gradient(#fbfbff, #e4e5f0 50%, #b2b3c6);
}
.toolbar.machine { margin-left: 1px; padding-left: 3px; }
.toolbar .grip { margin-right: 3px; }
.toolbar button { display: flex; align-items: center; justify-content: center; flex: none; width: 22px; height: 22px; }
.toolbar .wide { width: 24px; }
.toolbar .drop { width: 11px; color: #777; }
.toolbar svg { width: 16px; height: 16px; }
.sep { flex: none; width: 8px; height: 14px; background: linear-gradient(#b9bac8, #b9bac8) 3px 0 / 1px 100% no-repeat; }
.toolbar .on, .grid .on { border: 1px solid #0078d7; background: #cfe5f6; }
.combo {
  width: 126px;
  height: 20px;
  margin-left: 3px;
  border: 1px solid #fff;
  border-radius: 0;
  appearance: none;
  background:
    linear-gradient(45deg, transparent 50%, #000 50%) 115px 9px / 3px 3px no-repeat,
    linear-gradient(-45deg, transparent 50%, #000 50%) 118px 9px / 3px 3px no-repeat,
    linear-gradient(#e8e8f0, #c4c4d2) right / 12px 100% no-repeat,
    #fff;
}
.toolbar svg, .grid svg, .dock-head svg { fill: none; stroke: #1176ae; stroke-width: 1.5px; }
.grid svg { width: 16px; height: 16px; overflow: visible; }
.tiny, .icj { font: bold 7px "Liberation Sans", sans-serif; fill: #e06018; stroke: none; }
.toolbar .tiny { fill: #111; font-size: 5px; }
.tiny.dark { fill: #112; }
.icj { font-size: 10px; font-weight: normal; }

.workspace { display: flex; flex: 1; padding-bottom: 7px; }
.tools {
  position: relative;
  flex: none;
  width: 138px;
  border: solid #9a9aa2;
  border-width: 0 1px 1px;
  background: linear-gradient(90deg, #f5f7fe, #eaebfa);
}
.dock-head { display: flex; align-items: center; gap: 9px; height: 19px; padding: 0 5px 0 3px; background: linear-gradient(#c3d1dd, #d3e0ec); }
.dock-head h2 { flex: 1; }
.dock-head button, .dock-head svg { width: 10px; height: 10px; }
.tools h3 {
  display: flex;
  align-items: center;
  gap: 5px;
  height: 17px;
  margin: 0 0 5px 1px;
  padding-left: 6px;
  background: linear-gradient(#dfdff0, #c2c2da);
  font: 600 11px/16px "Open Sans", "Noto Sans", sans-serif;
  white-space: nowrap;
}
.tools h3:not(:first-of-type) { margin-top: 4px; }
.minus { flex: none; width: 10px; height: 10px; border: 1px solid #8a94ac; background: linear-gradient(#26468c, #26468c) center / 4px 1px no-repeat, #eef; }
.grid { display: grid; grid-template-columns: repeat(4, 28px); grid-auto-rows: 28px; padding-left: 4px; }
.grid button { display: flex; align-items: center; justify-content: center; }
.watermark {
  position: absolute;
  z-index: 2;
  right: -24px;
  bottom: 223px;
  writing-mode: vertical-rl;
  transform: rotate(180deg);
  color: #000;
  font: italic bold 32px/40px "Open Sans", "Noto Sans", sans-serif;
}

.editor {
  display: grid;
  flex: 1;
  min-width: 0;
  margin-left: 7px;
  grid-template: 21px minmax(0, 1fr) 20px / 19px minmax(0, 1fr);
  border-left: 1px solid #888;
}
.corner { background: #eee; border: solid #777; border-width: 1px 2px 2px 0; }
.ruler-x {
  display: flex;
  overflow: hidden;
  padding-left: 1px;
  border: solid #777;
  border-width: 1px 0 2px;
  background: #fff;
  font: 10px/15px "Liberation Sans", sans-serif;
}
.ruler-x span {
  flex: none;
  width: 50px;
  padding-right: 2px;
  text-align: right;
  background:
    linear-gradient(#000, #000) right bottom / 1px 14px no-repeat,
    repeating-linear-gradient(to left, #000 0 1px, transparent 1px 10px) bottom / 100% 6px no-repeat;
}
.ruler-y { position: relative; grid-row: 2 / 4; overflow: hidden; border: solid #777; border-width: 0 2px 0 1px; background: #fff; font: 10px/10px "Liberation Sans", sans-serif; }
.scale { display: flex; flex-direction: column; justify-content: flex-end; position: absolute; left: 0; right: 0; bottom: 23px; }
.scale span {
  height: 50px;
  padding-top: 1px;
  writing-mode: vertical-rl;
  transform: rotate(180deg);
  background:
    linear-gradient(#000, #000) left top / 100% 1px no-repeat,
    repeating-linear-gradient(#000 0 1px, transparent 1px 10px) left / 6px 100% no-repeat;
}
.scale .zero {
  height: 46px;
  background:
    linear-gradient(#000, #000) left top / 100% 1px no-repeat,
    repeating-linear-gradient(to top, transparent 0 9px, #000 9px 10px) left / 6px 100% no-repeat;
}
.canvas {
  display: flex;
  align-items: flex-end;
  background: linear-gradient(#c8c8c8, #c8c8c8) 0 calc(100% - 3px) / 100% 1px no-repeat, #000;
}
.design { width: 126px; height: 343px; }

.tabs { display: flex; overflow: hidden; border-top: 2px solid #777; background: #efefef; }
.pager { display: flex; align-items: center; width: 66px; padding-left: 2px; gap: 8px; }
.pager svg { width: 8px; height: 8px; fill: #333; stroke: #333; stroke-width: 1px; }
.pager path { stroke-width: 1px; }
.lead, .edge { width: 10px; height: 18px; }
.tab { height: 17px; border-bottom: 1px solid #444; padding: 0 2px; }
.tab.active { padding: 0; background: #fff; color: #f00; font-weight: bold; }

.palette h2 { height: 19px; padding-left: 4px; background: linear-gradient(#bccbd8, #d5e3f0); border-bottom: 1px solid #8e9298; line-height: 18px; }
.colors { display: flex; height: 49px; padding: 4px 0 0 5px; overflow: hidden; border-left: 1px solid #aaa; background: #f2f4fe; }
.current { display: grid; grid-template-columns: 32px 14px; width: 46px; flex: none; align-content: start; text-align: center; line-height: 10px; }
.pick { height: 32px; padding: 5px; border: 1px solid #0078d7; background: #a9d3f2; }
.colors svg { fill: #000; }
.pick svg, .swatches svg { width: 20px; height: 20px; fill: none; stroke: currentColor; stroke-width: 2px; }
.spin { display: grid; gap: 1px; grid-template-rows: 15px 15px; }
.spin button, .scroll button { display: grid; place-items: center; background: #fcfcfc; border: 1px solid #ddd; }
.spin svg, .scroll svg { width: 6px; height: 6px; }
.scroll { display: grid; grid-template-columns: 14px 14px; flex: none; height: 32px; margin: 0 5px 0 16px; }
.swatches { display: flex; flex: 1; min-width: 0; overflow: hidden; }
.swatches button { display: flex; flex-direction: column; align-items: center; flex: none; width: 32px; line-height: 10px; }
.swatches svg { margin: 6px; }
.swatches .sel svg { outline: 1px solid #0078d7; outline-offset: 5px; box-shadow: 0 0 0 5px #cfe5f8; }
.swatches .thin { stroke-width: 1px; }
.swatches text { fill: currentColor; stroke: none; font: bold 6px "Liberation Sans", sans-serif; }
.swatches .big { font-size: 9px; font-weight: normal; }

.status { display: flex; height: 20px; overflow: hidden; border: solid #b0b0b0; border-width: 1px 0; background: #f0f0f0; line-height: 20px; white-space: nowrap; }
.status span { padding-left: 5px; border-right: 1px solid #ccc; }
.s1 { flex: 0 0 248px; }
.s2 { flex: 0 0 70px; }
.s3 { flex: 0 0 246px; }
.s4 { flex: 0 0 82px; }
.status .s5 { flex: 1; border: 0; padding-left: 4px; }

.taskbar {
  display: flex;
  align-items: center;
  gap: 20px;
  height: 43px;
  overflow: hidden;
  padding: 2px 0 0 19px;
  background: linear-gradient(90deg, #dfe2df, #e3e2df 28%, #d9e1e9 45%, #e8ddd6 56%, #e2dfe2 75%, #e8e0df);
}
.weather { display: flex; align-items: flex-start; gap: 3px; flex: 0 0 556px; }
.weather b, .weather small { display: block; font-size: 11px; font-weight: normal; }
.weather small { color: #555; }
.weather text { fill: #fff; font-size: 11px; }
.taskbar button { flex: none; }
.search { display: flex; align-items: center; gap: 10px; flex: none; width: 218px; height: 30px; margin: 0 -7px; padding: 0 3px 0 10px; border: 1px solid #ddd; border-radius: 15px; background: #f6f4f4; }
.search input { flex: 1; min-width: 0; padding: 0; border: 0; outline: 0; background: none; font: 13px "Noto Sans", sans-serif; }
.search input::placeholder { color: #666; }
```
